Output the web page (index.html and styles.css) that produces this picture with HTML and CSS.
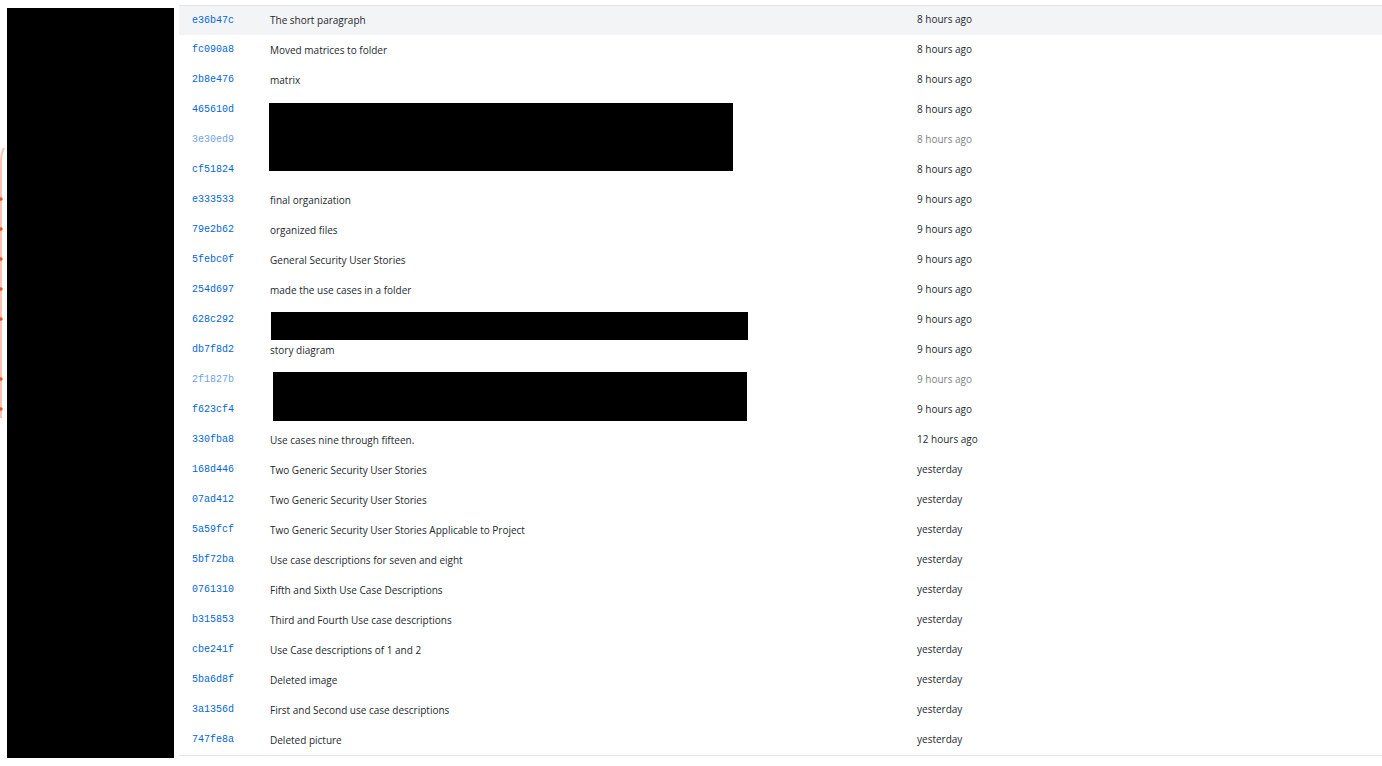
FILE: index.html
```html
<!DOCTYPE html>
<html lang="en">
<head>
<meta charset="utf-8">
<title>Commits</title>
<link rel="stylesheet" href="styles.css">
</head>
<body>
<div class="page">
  <div class="graph">
    <svg width="7" height="766" viewBox="0 0 7 766">
      <path d="M4 148 Q1 153 1 162 L1 418" fill="none" stroke="#fbc3b3" stroke-width="2"/>
      <g fill="#f4511e">
        <circle cx="1" cy="199" r="1.7"/>
        <circle cx="1" cy="229" r="1.7"/>
        <circle cx="1" cy="259" r="1.7"/>
        <circle cx="1" cy="289" r="1.7"/>
        <circle cx="1" cy="319" r="1.7"/>
        <circle cx="1" cy="379" r="1.7"/>
        <circle cx="1" cy="409" r="1.7"/>
      </g>
    </svg>
  </div>
  <div class="side"></div>
  <div class="commits">
    <div class="row hover"><span class="sha">e36b47c</span><span class="msg">The short paragraph</span><span class="time">8 hours ago</span></div>
    <div class="row"><span class="sha">fc090a8</span><span class="msg">Moved matrices to folder</span><span class="time">8 hours ago</span></div>
    <div class="row"><span class="sha">2b8e476</span><span class="msg">matrix</span><span class="time">8 hours ago</span></div>
    <div class="row"><span class="sha">465610d</span><span class="msg"><span class="redact r1"></span></span><span class="time">8 hours ago</span></div>
    <div class="row"><span class="sha dim">3e30ed9</span><span class="msg"></span><span class="time dim">8 hours ago</span></div>
    <div class="row"><span class="sha">cf51824</span><span class="msg"></span><span class="time">8 hours ago</span></div>
    <div class="row"><span class="sha">e333533</span><span class="msg">final organization</span><span class="time">9 hours ago</span></div>
    <div class="row"><span class="sha">79e2b62</span><span class="msg">organized files</span><span class="time">9 hours ago</span></div>
    <div class="row"><span class="sha">5febc0f</span><span class="msg">General Security User Stories</span><span class="time">9 hours ago</span></div>
    <div class="row"><span class="sha">254d697</span><span class="msg">made the use cases in a folder</span><span class="time">9 hours ago</span></div>
    <div class="row"><span class="sha">628c292</span><span class="msg"><span class="redact r2"></span></span><span class="time">9 hours ago</span></div>
    <div class="row"><span class="sha">db7f8d2</span><span class="msg">story diagram</span><span class="time">9 hours ago</span></div>
    <div class="row"><span class="sha dim">2f1827b</span><span class="msg"><span class="redact r3"></span></span><span class="time dim">9 hours ago</span></div>
    <div class="row"><span class="sha">f623cf4</span><span class="msg"></span><span class="time">9 hours ago</span></div>
    <div class="row"><span class="sha">330fba8</span><span class="msg">Use cases nine through fifteen.</span><span class="time">12 hours ago</span></div>
    <div class="row"><span class="sha">168d446</span><span class="msg">Two Generic Security User Stories</span><span class="time">yesterday</span></div>
    <div class="row"><span class="sha">07ad412</span><span class="msg">Two Generic Security User Stories</span><span class="time">yesterday</span></div>
    <div class="row"><span class="sha">5a59fcf</span><span class="msg">Two Generic Security User Stories Applicable to Project</span><span class="time">yesterday</span></div>
    <div class="row"><span class="sha">5bf72ba</span><span class="msg">Use case descriptions for seven and eight</span><span class="time">yesterday</span></div>
    <div class="row"><span class="sha">0761310</span><span class="msg">Fifth and Sixth Use Case Descriptions</span><span class="time">yesterday</span></div>
    <div class="row"><span class="sha">b315853</span><span class="msg">Third and Fourth Use case descriptions</span><span class="time">yesterday</span></div>
    <div class="row"><span class="sha">cbe241f</span><span class="msg">Use Case descriptions of 1 and 2</span><span class="time">yesterday</span></div>
    <div class="row"><span class="sha">5ba6d8f</span><span class="msg">Deleted image</span><span class="time">yesterday</span></div>
    <div class="row"><span class="sha">3a1356d</span><span class="msg">First and Second use case descriptions</span><span class="time">yesterday</span></div>
    <div class="row"><span class="sha">747fe8a</span><span class="msg">Deleted picture</span><span class="time">yesterday</span></div>
  </div>
</div>
</body>
</html>
```

FILE: styles.css
```css
html, body {
  margin: 0;
  padding: 0;
  background: #ffffff;
}

body {
  font-family: "Open Sans", "Noto Sans", "Liberation Sans", sans-serif;
  font-size: 10px;
  color: #24292e;
}

.page {
  display: flex;
  align-items: flex-start;
  width: 1382px;
  height: 766px;
  overflow: hidden;
}

.graph {
  flex: none;
  width: 7px;
  height: 766px;
}

.graph svg {
  display: block;
}

.side {
  flex: none;
  width: 167px;
  height: 750px;
  margin-top: 8px;
  background: #000000;
}

.commits {
  flex: 1;
  margin-left: 5px;
  margin-top: 5px;
  border-top: 1px solid #e1e4e8;
  border-bottom: 1px solid #e1e4e8;
}

.row {
  display: grid;
  grid-template-columns: 91px 647px 1fr;
  align-items: center;
  height: 30px;
}

.row:first-child {
  height: 29px;
}

.row.hover {
  background: #f3f4f6;
}

.sha {
  padding-left: 13px;
  padding-bottom: 1px;
  font-family: "Liberation Mono", "DejaVu Sans Mono", monospace;
  font-size: 10px;
  color: #0366d6;
}

.msg {
  position: relative;
  align-self: stretch;
  display: flex;
  align-items: center;
  padding-bottom: 1px;
  white-space: nowrap;
}

.time {
  white-space: nowrap;
  padding-bottom: 3px;
}

.dim {
  opacity: 0.6;
}

.redact {
  position: absolute;
  z-index: 1;
  background: #000000;
}

.redact.r1 {
  left: -1px;
  top: 8px;
  width: 464px;
  height: 68px;
}

.redact.r2 {
  left: 1px;
  top: 7px;
  width: 477px;
  height: 28px;
}

.redact.r3 {
  left: 3px;
  top: 7px;
  width: 474px;
  height: 49px;
}
```
